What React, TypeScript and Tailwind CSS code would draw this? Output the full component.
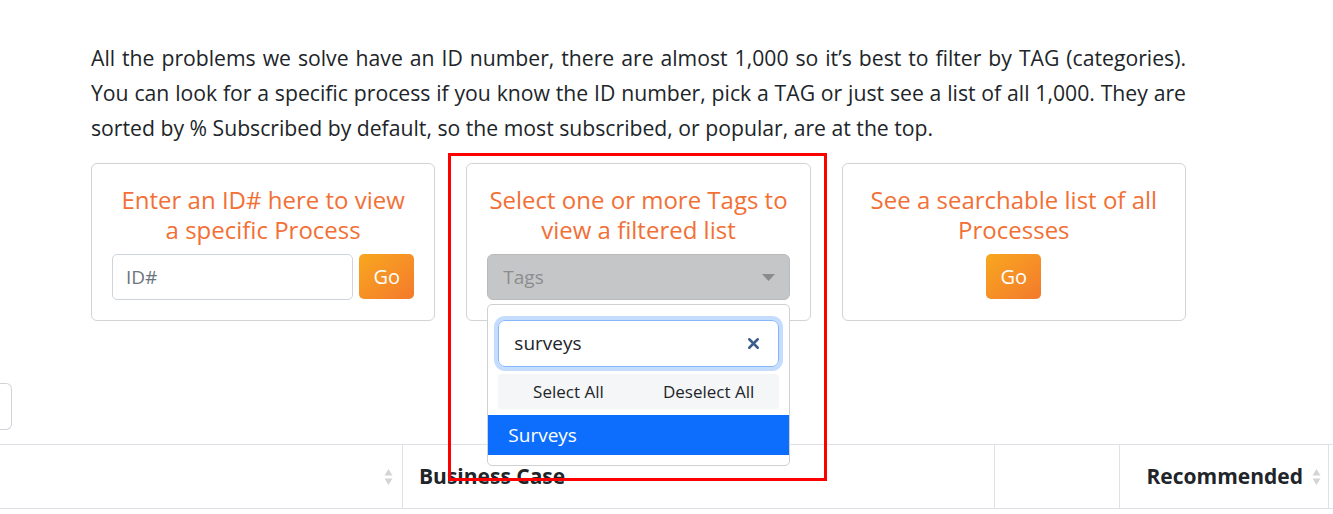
import { X } from "lucide-react";

function SortIcon() {
  return (
    <svg width="9" height="18" viewBox="0 0 9 18" className="shrink-0">
      <path d="M4.5 1 L8.5 7.5 H0.5 Z" fill="#d4d4d4" />
      <path d="M4.5 17 L8.5 10.5 H0.5 Z" fill="#d4d4d4" />
    </svg>
  );
}

function GoButton() {
  return (
    <button className="flex h-[45px] w-[55px] items-center justify-center rounded-[5px] bg-linear-to-br from-[#f8a71e] to-[#f3792b] text-[20px] text-white">
      Go
    </button>
  );
}

function Card({ lines, children }: { lines: string[]; children: React.ReactNode }) {
  return (
    <div className="flex h-[158px] flex-col rounded-[6px] border border-[#d3d3d3] px-[20px] pt-[21px]">
      <h3 className="whitespace-nowrap text-center text-[24px] font-medium leading-[30px] text-[#f27036]">
        {lines[0]}
        <br />
        {lines[1]}
      </h3>
      <div className="mt-[9px]">{children}</div>
    </div>
  );
}

export default function App() {
  return (
    <div className="relative h-[514px] w-[1333px] overflow-hidden bg-white font-['Open_Sans',sans-serif] text-[#212529]">
      <div className="w-[1186px] pl-[91px] pt-[40px]">
        <p className="text-[21.2px] leading-[35px]">
          <span className="block whitespace-nowrap text-justify [text-align-last:justify]">
            All the problems we solve have an ID number, there are almost 1,000 so it’s best to filter by TAG (categories).
          </span>
          <span className="block whitespace-nowrap text-justify [text-align-last:justify]">
            You can look for a specific process if you know the ID number, pick a TAG or just see a list of all 1,000. They are
          </span>
          <span className="block whitespace-nowrap">
            sorted by % Subscribed by default, so the most subscribed, or popular, are at the top.
          </span>
        </p>

        <div className="mt-[18px] grid grid-cols-3 gap-[31px]">
          <Card lines={["Enter an ID# here to view", "a specific Process"]}>
            <div className="flex gap-[6px]">
              <div className="flex h-[46px] flex-1 items-center rounded-[5px] border border-[#ced4da] px-[13px] text-[19px] text-[#6c757d]">
                ID#
              </div>
              <GoButton />
            </div>
          </Card>

          <Card lines={["Select one or more Tags to", "view a filtered list"]}>
            <div className="relative">
              <div className="flex h-[46px] items-center justify-between rounded-[6px] border border-[#b9babc] bg-[#c5c6c8] pl-[15px] pr-[14px] text-[19px] text-[#8b8d90]">
                Tags
                <svg width="13" height="7" viewBox="0 0 13 7">
                  <path d="M0 0 H13 L6.5 7 Z" fill="#8a8b8d" />
                </svg>
              </div>
              <div className="absolute left-0 right-0 top-[50px] z-10 rounded-[5px] border border-[#d0d0d0] bg-white pb-[10px] pt-[15px]">
                <div className="px-[10px]">
                  <div className="flex h-[47px] items-center justify-between rounded-[7px] border border-[#86b7fe] pl-[15px] pr-[16px] text-[19px] text-[#212529] ring-4 ring-[#c4dcfe]">
                    surveys
                    <X size={17} strokeWidth={3.5} className="text-[#3d5d8c]" />
                  </div>
                  <div className="mt-[7px] grid h-[35px] grid-cols-2 items-center rounded-[3px] bg-[#f5f6f8] text-center text-[17px]">
                    <span>Select All</span>
                    <span>Deselect All</span>
                  </div>
                </div>
                <div className="mt-[6px] flex h-[40px] items-center bg-[#0d6efd] px-[20px] text-[19px] text-white">
                  Surveys
                </div>
              </div>
            </div>
          </Card>

          <Card lines={["See a searchable list of all", "Processes"]}>
            <div className="flex justify-center">
              <GoButton />
            </div>
          </Card>
        </div>
      </div>

      <div className="mt-[62px] h-[47px] w-[12px] rounded-r-[6px] border border-l-0 border-[#ced4da]" />

      <div className="mt-[14px] flex h-[65px] border-y border-[#dee2e6] text-[21px] font-bold">
        <div className="flex w-[403px] items-center justify-end border-r border-[#dee2e6] pr-[9px]">
          <SortIcon />
        </div>
        <div className="flex w-[592px] items-center border-r border-[#dee2e6] pl-[16px]">Business Case</div>
        <div className="w-[125px] border-r border-[#dee2e6]" />
        <div className="flex w-[209px] items-center justify-end gap-[9px] border-r border-[#dee2e6] pr-[7px]">
          Recommended
          <SortIcon />
        </div>
        <div className="flex-1" />
      </div>

      <div className="pointer-events-none absolute left-[448px] top-[153px] z-20 h-[328px] w-[379px] border-[3px] border-[#ff0000]" />
    </div>
  );
}
